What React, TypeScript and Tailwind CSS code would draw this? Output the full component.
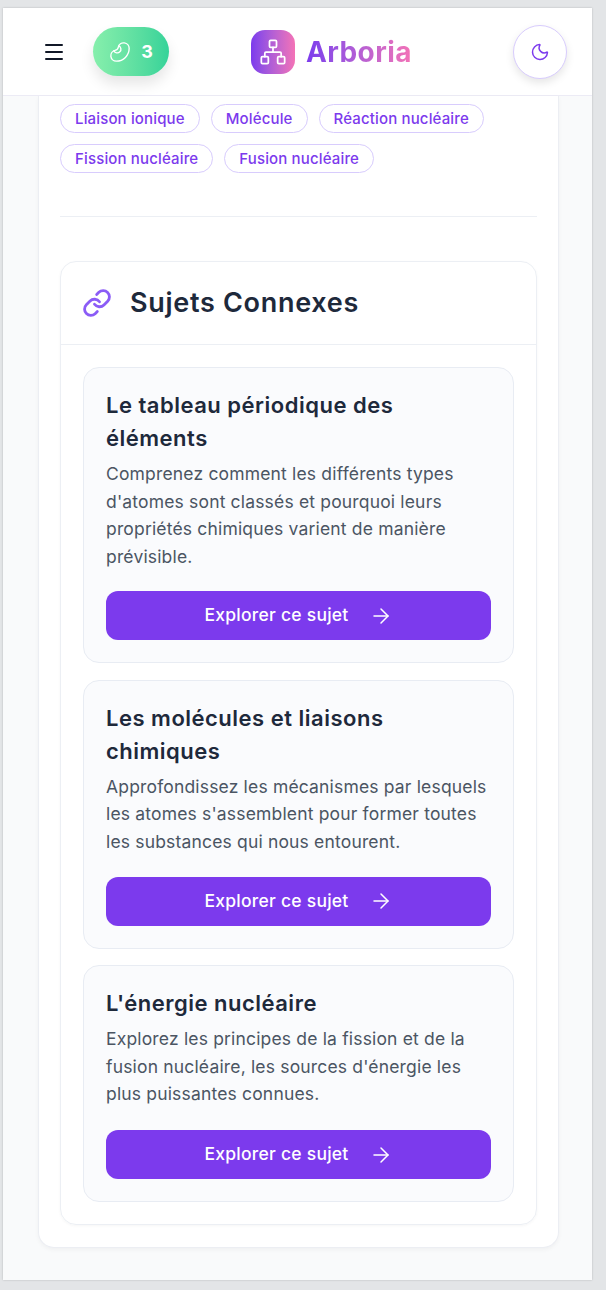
import React from "react";
import { ArrowRight, Link, Menu, Moon, Bean, Network } from "lucide-react";

const body = "font-['Inter','Noto_Sans',sans-serif]";

const tagRows = [
  ["Liaison ionique", "Molécule", "Réaction nucléaire"],
  ["Fission nucléaire", "Fusion nucléaire"],
];

const topics = [
  {
    title: ["Le tableau périodique des", "éléments"],
    text: [
      "Comprenez comment les différents types",
      "d'atomes sont classés et pourquoi leurs",
      "propriétés chimiques varient de manière",
      "prévisible.",
    ],
    cls: "h-[296px]",
  },
  {
    title: ["Les molécules et liaisons", "chimiques"],
    text: [
      "Approfondissez les mécanismes par lesquels",
      "les atomes s'assemblent pour former toutes",
      "les substances qui nous entourent.",
    ],
    cls: "h-[269px]",
  },
  {
    title: ["L'énergie nucléaire"],
    text: [
      "Explorez les principes de la fission et de la",
      "fusion nucléaire, les sources d'énergie les",
      "plus puissantes connues.",
    ],
    cls: "h-[237px]",
  },
];

const App = () => {
  return (
    <div className={`w-[606px] h-[1290px] bg-[#e3e5e7] pt-2 pl-[3px] pr-[14px] pb-[10px] ${body}`}>
      <div className="h-full flex flex-col bg-[#f9fafb] shadow-[0_0_2px_rgba(0,0,0,0.2)]">
        <header className="h-[88px] shrink-0 bg-white border-b border-[#ecebf5] flex items-center pl-[39px] pr-[25px]">
          <div className="flex items-center gap-[27px]">
            <Menu size={24} strokeWidth={2} className="text-[#111827]" />
            <div className="w-[76px] h-[49px] rounded-full bg-gradient-to-r from-[#86efac] to-[#34d399] flex items-center justify-center gap-[10px] text-white shadow-[0_8px_14px_rgba(0,0,0,0.1)]">
              <Bean size={22} strokeWidth={1.5} />
              <span className="text-[18px] font-bold">3</span>
            </div>
          </div>
          <div className="flex items-center gap-[11px] ml-[82px]">
            <div className="w-[44px] h-[44px] rounded-[14px] bg-gradient-to-r from-[#7c3aed] to-[#f472b6] flex items-center justify-center text-white">
              <Network size={28} strokeWidth={1.5} />
            </div>
            <span className="text-[28px] leading-none font-bold tracking-[0.4px] bg-gradient-to-r from-[#7c3aed] to-[#f472b6] bg-clip-text text-transparent">
              Arboria
            </span>
          </div>
          <div className="ml-auto w-[54px] h-[54px] rounded-full bg-white border border-[#d8ccfd] flex items-center justify-center text-[#7c3aed] shadow-[0_4px_8px_rgba(0,0,0,0.1)]">
            <Moon size={20} strokeWidth={1.75} />
          </div>
        </header>

        <div className="pl-[35px] pr-[33px]">
          <main className="bg-white border-x border-b border-[#eceef3] rounded-b-[16px] px-[21px] pt-2 pb-[22px] shadow-[0_2px_4px_rgba(0,0,0,0.04)]">
            <div className="flex flex-col gap-[11px] pb-[43px] border-b border-[#eceff4]">
              {tagRows.map((row, i) => (
                <div key={i} className="flex gap-[11px]">
                  {row.map((t) => (
                    <span
                      key={t}
                      className="h-[29px] pt-px px-[14px] rounded-full border border-[#d8ccfd] flex items-center text-[15px] font-medium tracking-[0.15px] text-[#7c3aed]"
                    >
                      {t}
                    </span>
                  ))}
                </div>
              ))}
            </div>

            <section className="mt-11 border border-[#eceff4] rounded-[16px] shadow-[0_1px_3px_rgba(0,0,0,0.04)]">
              <div className="h-[83px] border-b border-[#eceff4] flex items-center pl-[21px] gap-[18px]">
                <Link size={30} strokeWidth={2.25} className="text-[#8b5cf6]" />
                <h2 className="text-[27px] font-semibold tracking-[0.7px] text-[#1e293b]">Sujets Connexes</h2>
              </div>
              <div className="p-[22px] flex flex-col gap-[16.5px]">
                {topics.map((topic) => (
                  <article
                    key={topic.title[0]}
                    className={`${topic.cls} bg-[#fafbfd] border border-[#e8ecf3] rounded-[16px] px-[22px] pt-[21px] pb-[22px] flex flex-col`}
                  >
                    <h3 className="text-[22px] leading-[33px] font-semibold tracking-[0.5px] text-[#1e293b]">
                      {topic.title.map((l) => (
                        <div key={l}>{l}</div>
                      ))}
                    </h3>
                    <p className="text-[17.5px] leading-[27.5px] text-[#4b5563] tracking-[0.17px] mt-[5px]">
                      {topic.text.map((l) => (
                        <span key={l} className="block whitespace-nowrap">{l}</span>
                      ))}
                    </p>
                    <button className="mt-auto h-[49px] shrink-0 rounded-[12px] bg-[#7c3aed] text-white flex items-center justify-center gap-[20px] text-[17.5px] font-medium tracking-[0.25px]">
                      Explorer ce sujet
                      <ArrowRight size={24} strokeWidth={1.5} />
                    </button>
                  </article>
                ))}
              </div>
            </section>
          </main>
        </div>
      </div>
    </div>
  );
};

export default App;
